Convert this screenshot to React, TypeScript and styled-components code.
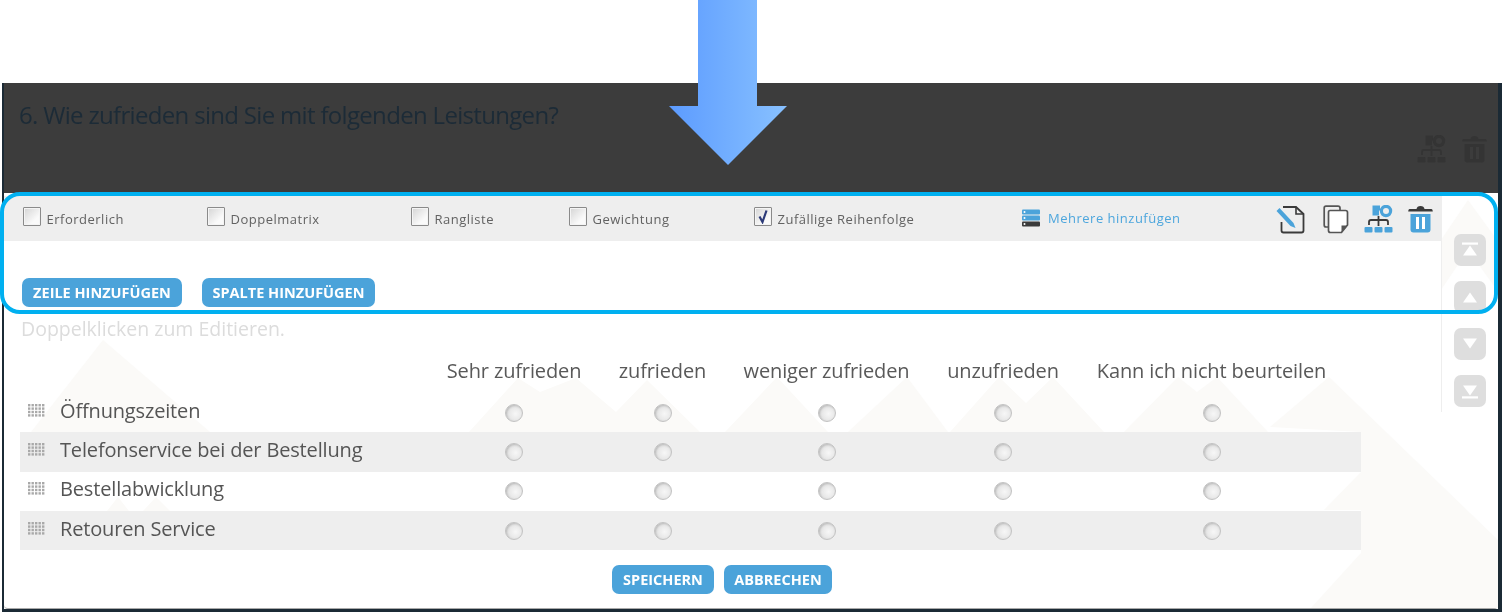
import React from "react";
import styled, { createGlobalStyle } from "styled-components";

const Global = createGlobalStyle`
  html, body { margin: 0; padding: 0; background: #fff; }
  body { font-family: "Open Sans", "Liberation Sans", sans-serif; }
`;

const Page = styled.div`
  position: relative;
  width: 1502px;
  height: 612px;
  overflow: hidden;
  background: #fff;
  padding-top: 83px;
  box-sizing: border-box;
`;

const Frame = styled.div`
  margin-left: 2px;
  width: 1500px;
  height: 529px;
  box-sizing: border-box;
  border-left: 2px solid #1b2a35;
  border-right: 4px solid #1b2a35;
  border-bottom: 3px solid #1b2a35;
  display: flex;
  flex-direction: column;
  filter: blur(0.35px);
`;

const DarkHeader = styled.header`
  height: 110px;
  box-sizing: border-box;
  background: #3c3c3c;
  padding: 15px 11px 0 15px;
  flex: none;
`;

const Title = styled.h2`
  margin: 0;
  font-size: 24px;
  line-height: 33px;
  font-weight: 400;
  color: #1c2b37;
  letter-spacing: -0.68px;
`;

const GhostIcons = styled.div`
  display: flex;
  justify-content: flex-end;
  gap: 16px;
  margin-top: 4px;
`;

const Panel = styled.section`
  position: relative;
  flex: 1;
  background: #fff;
  border-bottom: 1px solid #a9a9a9;
  border-radius: 0 0 4px 4px;
  display: grid;
  grid-template-columns: 1437px 57px;
  align-items: start;
  padding-top: 3px;
  box-sizing: border-box;
`;

const Backdrop = styled.svg`
  position: absolute;
  left: 0;
  top: 0;
`;

const Main = styled.div`
  position: relative;
`;

const Toolbar = styled.div`
  height: 45px;
  background: #eeeeee;
  display: grid;
  grid-template-columns: 184px 204px 158px 185px 268px 1fr;
  align-items: center;
  padding-left: 19px;
  box-sizing: border-box;
`;

const Option = styled.label`
  display: flex;
  align-items: flex-start;
  gap: 5.5px;
  font-size: 13px;
  line-height: 18px;
  color: #626262;
  letter-spacing: 0.5px;
`;

const Box = styled.span`
  width: 18px;
  height: 19px;
  box-sizing: border-box;
  border: 1px solid #8a8a8a;
  border-radius: 1px;
  background: linear-gradient(135deg, #d4d4d4, #fafafa 70%);
  box-shadow: inset 0 0 0 1px #f4f4f4;
  margin-top: -2px;
  display: flex;
  align-items: center;
  justify-content: center;
  flex: none;
`;

const OptionText = styled.span`
  margin-top: 1px;
`;

const ToolCell = styled.div`
  display: flex;
  align-items: center;
`;

const AddMany = styled.a`
  display: flex;
  align-items: center;
  gap: 8px;
  font-size: 13px;
  line-height: 18px;
  color: #4da6dd;
  letter-spacing: 0.5px;
  margin-top: -2px;
`;

const ToolIcons = styled.div`
  display: flex;
  align-items: center;
  margin-left: 95px;
  margin-top: 1px;
`;

const ToolSlot = styled.span<{ $w: number }>`
  width: ${(p) => p.$w}px;
  display: block;
  height: 28px;
`;

const Body = styled.div`
  padding-left: 16px;
`;

const ButtonRow = styled.div<{ $center?: boolean }>`
  display: flex;
  gap: ${(p) => (p.$center ? 10 : 20)}px;
  padding-left: ${(p) => (p.$center ? 592 : 2)}px;
  padding-top: ${(p) => (p.$center ? 14.6 : 37)}px;
`;

const ActionButton = styled.button<{ $w: number }>`
  width: ${(p) => p.$w}px;
  height: 29px;
  padding: 0;
  border: 0;
  border-radius: 7px;
  background: #4ba3da;
  color: #fff;
  font: 700 14.5px/29px "Open Sans", "Liberation Sans", sans-serif;
  letter-spacing: 0;
  text-transform: uppercase;
`;

const Hint = styled.p`
  margin: 9px 0 0 1px;
  font-size: 19.5px;
  line-height: 26px;
  color: #dcdcdc;
`;

const MatrixHead = styled.div`
  display: grid;
  grid-template-columns: 408px 172px 125px 203px 150px 267px 16px;
  width: 1341px;
  height: 51.1px;
  align-items: center;
  padding-top: 5.3px;
  box-sizing: border-box;
  font-size: 20px;
  color: #595959;
  text-align: center;
  letter-spacing: -0.13px;
`;

const MatrixRow = styled.div<{ $shade: boolean }>`
  display: grid;
  grid-template-columns: 408px 172px 125px 203px 150px 267px 16px;
  width: 1341px;
  height: 39.3px;
  align-items: center;
  background: ${(p) => (p.$shade ? "#eeeeee" : "transparent")};
`;

const RowLabel = styled.div`
  display: flex;
  align-items: center;
  gap: 15px;
  padding-left: 8px;
  font-size: 20px;
  color: #555;
  margin-top: -5px;
  letter-spacing: -0.16px;
`;

const Radio = styled.span`
  justify-self: center;
  width: 18px;
  height: 18px;
  box-sizing: border-box;
  border-radius: 50%;
  border: 1px solid #c2c2c2;
  background: radial-gradient(circle at 60% 55%, #f7f7f7, #e0e0e0 75%);
  box-shadow: inset 1px 1px 2px #bcbcbc;
`;

const Side = styled.aside`
  position: relative;
  height: 216px;
  box-sizing: border-box;
  border-left: 1px solid #eeeeee;
  padding: 38px 0 0 12px;
  display: flex;
  flex-direction: column;
  gap: 15px;
`;

const MoveButton = styled.button`
  width: 32px;
  height: 32px;
  padding: 0;
  border: 0;
  border-radius: 7px;
  background: #dedede;
  display: flex;
  align-items: center;
  justify-content: center;
`;

const Highlight = styled.div`
  position: absolute;
  left: 0;
  top: 192px;
  width: 1498px;
  height: 122px;
  box-sizing: border-box;
  border: 4px solid #00b0f0;
  border-radius: 20px;
  pointer-events: none;
`;

const Arrow = styled.svg`
  position: absolute;
  left: 669px;
  top: 0;
`;

const Check = () => (
  <svg width="12" height="15" viewBox="0 0 12 15">
    <path d="M2.5 7.5 L5.5 13 L9.5 1.5" fill="none" stroke="#2c3a78" strokeWidth="2.2" />
  </svg>
);

const Grip = () => (
  <svg width="17" height="13" viewBox="0 0 17 13">
    {[0, 1, 2, 3].flatMap((r) =>
      [0, 1, 2, 3, 4].map((c) => (
        <rect key={`${r}-${c}`} x={c * 3.5} y={r * 3.4} width="2.4" height="2.4" fill="#a9a9a9" />
      ))
    )}
  </svg>
);

const ServerIcon = () => (
  <svg width="18" height="18" viewBox="0 0 18 18">
    <rect x="0" y="0.5" width="18" height="5" rx="1" fill="#4ba3da" />
    <rect x="0" y="6.5" width="18" height="5" rx="1" fill="#4ba3da" />
    <rect x="0" y="12.5" width="18" height="5" rx="1" fill="#3b3b3b" />
    <circle cx="2.5" cy="3" r="1" fill="#fff" />
    <circle cx="2.5" cy="9" r="1" fill="#fff" />
    <circle cx="2.5" cy="15" r="1" fill="#fff" />
  </svg>
);

const EditIcon = () => (
  <svg width="29" height="29" viewBox="0 0 29 29">
    <path d="M7 2 H20 L27.5 9 V25.5 Q27.5 27.5 25.5 27.5 H7.5 Q5.5 27.5 5.5 25.5 V17" fill="none" stroke="#3a3a3a" strokeWidth="1.8" />
    <path d="M20 2 V9 H27.5" fill="none" stroke="#3a3a3a" strokeWidth="1.6" />
    <path d="M0.5 6 L3.5 3 L17.5 18 L19.5 23 L14.5 21 Z" fill="#4ba3da" />
  </svg>
);

const CopyIcon = () => (
  <svg width="26" height="29" viewBox="0 0 26 29">
    <path d="M5 22 H3 Q1.2 22 1.2 20 V3 Q1.2 1.2 3 1.2 H15 Q17 1.2 17 3 V5" fill="none" stroke="#555" strokeWidth="1.7" />
    <path d="M7 5.5 H22.5 Q24.5 5.5 24.5 7.5 V20 L18.5 27.5 H7.5 Q5.5 27.5 5.5 25.5 V7.5 Q5.5 5.5 7 5.5 Z" fill="#fff" stroke="#555" strokeWidth="1.7" />
    <path d="M24.5 20.5 H18.5 V27.5 Z" fill="#555" />
  </svg>
);

const OrgIcon = ({ top, line }: { top: string; line: string }) => (
  <svg width="29" height="28" viewBox="0 0 29 28">
    <path d="M8.5 0.5 H16 V5 L15 6 V10.5 H8.5 Z" fill={top} />
    <circle cx="22" cy="6" r="4.6" fill="none" stroke={top} strokeWidth="3.2" />
    <path d="M14.5 11 V21 M5 20 V17 Q5 15 7 15 H22 Q24 15 24 17 V20" fill="none" stroke={line} strokeWidth="1.8" />
    <rect x="0.5" y="22" width="8" height="5.5" rx="1" fill={top} />
    <rect x="10.5" y="22" width="8" height="5.5" rx="1" fill={top} />
    <rect x="20.5" y="22" width="8" height="5.5" rx="1" fill={top} />
  </svg>
);

const TrashIcon = ({ body, lid, bars }: { body: string; lid: string; bars: string }) => (
  <svg width="25" height="28" viewBox="0 0 25 28">
    <path d="M8.5 4 Q9 1 12.5 1 Q16 1 16.5 4 H23.5 Q24.8 4 24.8 6.5 H0.2 Q0.2 4 1.5 4 Z" fill={lid} />
    <path d="M2.5 9 H22.5 V24.5 Q22.5 27.5 19.5 27.5 H5.5 Q2.5 27.5 2.5 24.5 Z" fill={body} />
    <rect x="8" y="12" width="3" height="12" fill={bars} />
    <rect x="14" y="12" width="3" height="12" fill={bars} />
  </svg>
);

type MoveKind = "top" | "up" | "down" | "bottom";
const MoveIcon = ({ kind }: { kind: MoveKind }) => (
  <svg width="20" height="16" viewBox="0 0 20 16">
    {kind === "top" && <rect x="2" y="0.5" width="16" height="2.2" fill="#fff" />}
    {kind === "bottom" && <rect x="2" y="13.3" width="16" height="2.2" fill="#fff" />}
    {(kind === "top" || kind === "up") && <path d="M3 13.5 L10 3.5 L17 13.5 Z" fill="#fff" />}
    {(kind === "bottom" || kind === "down") && <path d="M3 2.5 L17 2.5 L10 12.5 Z" fill="#fff" />}
  </svg>
);

const options = [
  { label: "Erforderlich", on: false },
  { label: "Doppelmatrix", on: false },
  { label: "Rangliste", on: false },
  { label: "Gewichtung", on: false },
  { label: "Zufällige Reihenfolge", on: true },
];
const columns = ["Sehr zufrieden", "zufrieden", "weniger zufrieden", "unzufrieden", "Kann ich nicht beurteilen"];
const rows = ["Öffnungszeiten", "Telefonservice bei der Bestellung", "Bestellabwicklung", "Retouren Service"];
const moves: MoveKind[] = ["top", "up", "down", "bottom"];

const mountains = [
  "31,432 103,340 210,432",
  "107,511 118,497 129,511",
  "143,511 156,497 170,511",
  "469,432 518,378 540,392 576,378 616,412 647,380 700,432",
  "725,432 777,377 828,432",
  "848,432 907,377 948,432",
  "950,432 999,377 1026,403 1053,377 1104,432",
  "1124,432 1178,377 1197,392 1217,377 1268,432",
  "1270,427 1329,377 1498,540 1498,608 1311,608 1361,553 1361,510 1324,510 1361,472 1361,432",
  "1441,290 1441,240 1468,200 1497,240 1497,290 1468,250",
];

export default function App() {
  return (
    <Page>
      <Global />
      <Frame>
        <DarkHeader>
          <Title>6. Wie zufrieden sind Sie mit folgenden Leistungen?</Title>
          <GhostIcons>
            <OrgIcon top="#343434" line="#343434" />
            <TrashIcon body="#343434" lid="#343434" bars="#3c3c3c" />
          </GhostIcons>
        </DarkHeader>
        <Panel>
          <Backdrop width="1494" height="415" viewBox="4 193 1494 415">
            {mountains.map((m) => (
              <polygon key={m} points={m} fill="#fbfaf8" />
            ))}
          </Backdrop>
          <Main>
            <Toolbar>
              {options.map((o) => (
                <Option key={o.label}>
                  <Box>{o.on && <Check />}</Box>
                  <OptionText>{o.label}</OptionText>
                </Option>
              ))}
              <ToolCell>
                <AddMany>
                  <ServerIcon />
                  Mehrere hinzufügen
                </AddMany>
                <ToolIcons>
                  <ToolSlot $w={47}><EditIcon /></ToolSlot>
                  <ToolSlot $w={41}><CopyIcon /></ToolSlot>
                  <ToolSlot $w={44}><OrgIcon top="#4ba3da" line="#3a3a3a" /></ToolSlot>
                  <ToolSlot $w={25}><TrashIcon body="#4ba3da" lid="#3a3a3a" bars="#fff" /></ToolSlot>
                </ToolIcons>
              </ToolCell>
            </Toolbar>
            <Body>
              <ButtonRow>
                <ActionButton $w={160}>Zeile hinzufügen</ActionButton>
                <ActionButton $w={173}>Spalte hinzufügen</ActionButton>
              </ButtonRow>
              <Hint>Doppelklicken zum Editieren.</Hint>
              <MatrixHead>
                <span />
                {columns.map((c) => (
                  <span key={c}>{c}</span>
                ))}
              </MatrixHead>
              {rows.map((r, i) => (
                <MatrixRow key={r} $shade={i % 2 === 1}>
                  <RowLabel>
                    <Grip />
                    {r}
                  </RowLabel>
                  {columns.map((c) => (
                    <Radio key={c} />
                  ))}
                </MatrixRow>
              ))}
              <ButtonRow $center>
                <ActionButton $w={102}>Speichern</ActionButton>
                <ActionButton $w={108}>Abbrechen</ActionButton>
              </ButtonRow>
            </Body>
          </Main>
          <Side>
            {moves.map((m) => (
              <MoveButton key={m}>
                <MoveIcon kind={m} />
              </MoveButton>
            ))}
          </Side>
        </Panel>
      </Frame>
      <Highlight />
      <Arrow width="118" height="165" viewBox="0 0 118 165">
        <defs>
          <linearGradient id="arrowFill" x1="0" x2="1" y1="0" y2="0">
            <stop offset="0" stopColor="#5c9bff" />
            <stop offset="1" stopColor="#88c1ff" />
          </linearGradient>
        </defs>
        <path d="M29 0 H88 V106 H118 L59 165 L0 106 H29 Z" fill="url(#arrowFill)" />
      </Arrow>
    </Page>
  );
}
